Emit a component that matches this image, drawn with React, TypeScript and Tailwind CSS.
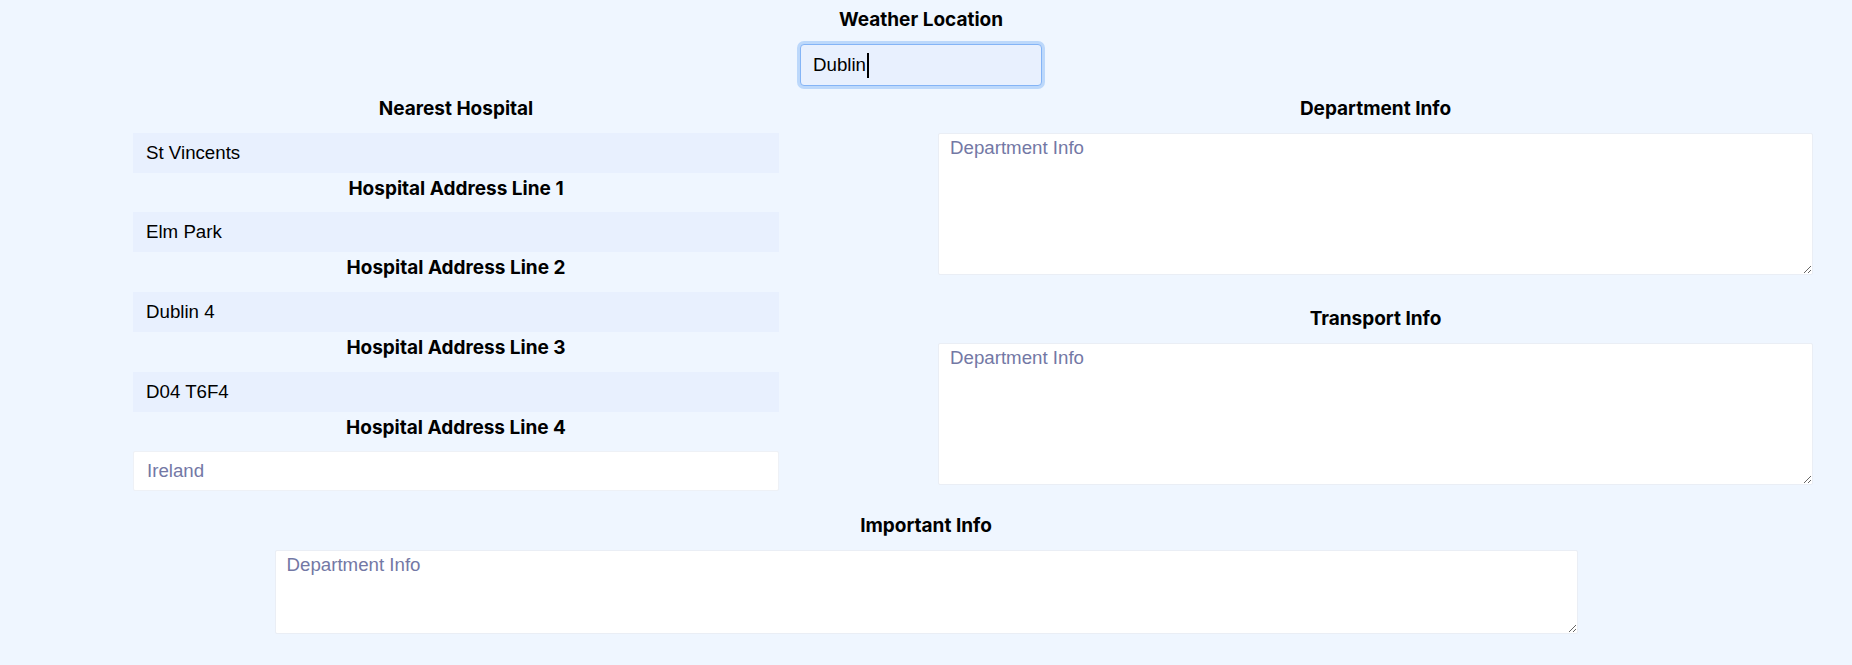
import React from "react";

const label = "font-['Inter',sans-serif] font-bold text-[19px] leading-6 text-black text-center";
const filled =
  "w-full h-10 bg-[#e8f0fe] pl-[13px] pr-3 text-[18.7px] text-black font-['Liberation_Sans',Arial,sans-serif] outline-none";
const area =
  "block bg-white border border-[#eaeef5] rounded-[2px] px-[11px] pt-[3px] text-[18.7px] leading-[1.15] font-['Liberation_Sans',Arial,sans-serif] text-black placeholder:text-[#7378a5] outline-none";

function Field({ title, value, placeholder }: { title: string; value?: string; placeholder?: string }) {
  return (
    <div className="flex flex-col">
      <div className={`${label} h-[39.7px] pt-1`}>{title}</div>
      {value ? (
        <input className={filled} defaultValue={value} />
      ) : (
        <input
          className="w-full h-10 bg-white border border-[#eef1f6] rounded-[2px] pl-[13px] pr-3 text-[18.7px] font-['Liberation_Sans',Arial,sans-serif] placeholder:text-[#7378a5] outline-none"
          placeholder={placeholder}
        />
      )}
    </div>
  );
}

export default function App() {
  return (
    <div className="h-[665px] overflow-hidden w-full bg-[#eff6ff]">
      <div className="flex flex-col items-center pt-[8px] pr-[10px]">
        <div className={label}>Weather Location</div>
        <div className="relative mt-[12px]">
          <input
            className="w-[242px] h-[42px] rounded-[4px] bg-[#e8f0fe] border border-[#84b4f6] ring-[3px] ring-[#bcd8fb] pl-[12px] text-[18.7px] text-black font-['Liberation_Sans',Arial,sans-serif] outline-none"
            defaultValue="Dublin"
          />
          <span className="absolute left-[67px] top-[9px] w-[1.5px] h-[25px] bg-black" />
        </div>
      </div>

      <div className="flex items-start pl-[133px] pt-[7px]">
        <div className="w-[646px] flex flex-col">
          <Field title="Nearest Hospital" value="St Vincents" />
          <Field title="Hospital Address Line 1" value="Elm Park" />
          <Field title="Hospital Address Line 2" value="Dublin 4" />
          <Field title="Hospital Address Line 3" value="D04 T6F4" />
          <Field title="Hospital Address Line 4" placeholder="Ireland" />
        </div>
        <div className="ml-[159px] w-[875px] flex flex-col">
          <div className={`${label} h-10 pt-1`}>Department Info</div>
          <textarea className={`${area} w-full h-[142px]`} placeholder="Department Info" />
          <div className={`${label} h-10 pt-1 mt-[28px]`}>Transport Info</div>
          <textarea className={`${area} w-full h-[142px]`} placeholder="Department Info" />
        </div>
      </div>

      <div className="flex flex-col items-center mt-[18px]">
        <div className={`${label} h-10 pt-[5px]`}>Important Info</div>
        <textarea className={`${area} w-[1303px] h-[84px] mt-px`} placeholder="Department Info" />
      </div>
    </div>
  );
}
